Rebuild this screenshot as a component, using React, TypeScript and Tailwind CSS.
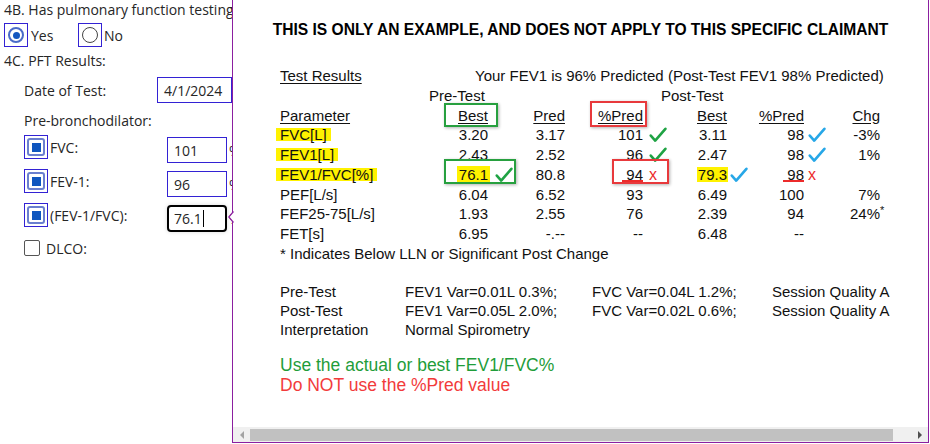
import React from 'react';

const PURPLE = '#8b1fa0';

const Check = ({ color, className = '' }: { color: string; className?: string }) => (
  <svg viewBox="0 0 18 16" className={`w-[18px] h-[16px] shrink-0 ${className}`}>
    <path d="M1.8 8.6 L6.2 13.6 L16.4 1.8" fill="none" stroke={color} strokeWidth="2.6" strokeLinecap="round" strokeLinejoin="round" />
  </svg>
);

const RedX = () => <span className="text-[#ec2b2b] text-[16px] leading-none">x</span>;

const Hl: React.FC<{ children: React.ReactNode }> = ({ children }) => (
  <span className="inline-block bg-[#fff200] leading-[13px] px-[4px] -mx-[4px]">{children}</span>
);

const Struck: React.FC<{ children: React.ReactNode }> = ({ children }) => (
  <span className="relative">
    {children}
    <span className="absolute left-[-4px] right-0 bottom-[1px] h-[2px] bg-[#ec2b2b]"></span>
  </span>
);

// one line of the spirometry table, cells at fixed widths
const Row: React.FC<{ c: React.ReactNode[] }> = ({ c }) => (
  <div className="flex items-center h-[19.75px]">
    <div className="w-[160px] whitespace-nowrap">{c[0]}</div>
    <div className="w-[48px] text-right relative">{c[1]}</div>
    <div className="w-[77px] text-right">{c[2]}</div>
    <div className="w-[78px] text-right">{c[3]}</div>
    <div className="w-[30px] flex items-center pl-[6px]">{c[4]}</div>
    <div className="w-[54px] text-right">{c[5]}</div>
    <div className="w-[22px] flex items-center pl-[3px]">{c[6]}</div>
    <div className="w-[55px] text-right">{c[7]}</div>
    <div className="w-[30px] flex items-center pl-[4px]">{c[8]}</div>
    <div className="w-[46px] text-right">{c[9]}</div>
  </div>
);

const FocusBox: React.FC<{ children: React.ReactNode; className?: string }> = ({ children, className = '' }) => (
  <div className={`w-[24px] h-[24px] border border-[#3322d4] flex items-center justify-center shrink-0 ${className}`}>
    {children}
  </div>
);

const CheckedBox = () => (
  <div className="w-[18px] h-[18px] rounded-[3px] border-2 border-[#6a7fcf] flex items-center justify-center">
    <div className="w-[9px] h-[9px] bg-[#0f56bf]"></div>
  </div>
);

const ValueRow: React.FC<{ label: string; value: string; focused?: boolean }> = ({ label, value, focused }) => (
  <div className="flex items-start h-[34px] pl-[24px]">
    <div className="flex items-center h-[24px] w-[143px] shrink-0">
      <FocusBox>
        <CheckedBox />
      </FocusBox>
      <span className="ml-[2px]">{label}</span>
    </div>
    {focused ? (
      <div className="mt-[2px] w-[60px] h-[27px] shrink-0 border-2 border-black rounded-[4px] flex items-center pl-[5px] shadow-[0_0_4px_rgba(0,0,0,0.15)]">
        {value}
        <span className="w-[1px] h-[17px] bg-black ml-[1px]"></span>
      </div>
    ) : (
      <div className="mt-[2px] w-[60px] h-[26px] shrink-0 border border-[#3322d4] flex items-center pl-[6px]">{value}</div>
    )}
    <span className="ml-[2px] mt-[5px]">%</span>
  </div>
);

const App: React.FC = () => {
  return (
    <div className="flex w-[930px] h-[444px] bg-white overflow-hidden">
      {/* form column */}
      <div className="w-[232px] shrink-0 overflow-hidden font-['Open_Sans',sans-serif] text-[14px] text-[#262626] whitespace-nowrap">
        <div className="pl-[4px] leading-[20px]">4B. Has pulmonary function testing been performed?</div>
        <div className="flex items-center mt-[3px] h-[24px]">
          <div className="flex items-center w-[78px] pl-[4px]">
            <FocusBox className="w-[23px]">
              <div className="w-[16px] h-[16px] rounded-full border-2 border-[#4a6bc8] flex items-center justify-center">
                <div className="w-[7px] h-[7px] rounded-full bg-[#1457c0]"></div>
              </div>
            </FocusBox>
            <span className="ml-[3px]">Yes</span>
          </div>
          <FocusBox className="w-[23px]">
            <div className="w-[16px] h-[16px] rounded-full border-[1.5px] border-[#444]"></div>
          </FocusBox>
          <span className="ml-[2px]">No</span>
        </div>
        <div className="pl-[4px] leading-[20px] mt-[4px]">4C. PFT Results:</div>
        <div className="flex items-center h-[26px] mt-[6px] pl-[24px]">
          <span className="w-[143px]">Date of Test:</span>
          <div className="w-[80px] h-[26px] border border-[#3322d4] flex items-center pl-[6px]">4/1/2024</div>
        </div>
        <div className="pl-[24px] leading-[20px] mt-[8px]">Pre-bronchodilator:</div>
        <div className="mt-[4px]">
          <ValueRow label="FVC:" value="101" />
          <ValueRow label="FEV-1:" value="96" />
          <ValueRow label="(FEV-1/FVC):" value="76.1" focused />
        </div>
        <div className="flex items-center pl-[24px] mt-[3px] h-[16px]">
          <div className="w-[16px] h-[16px] border border-[#555] rounded-[2px]"></div>
          <span className="ml-[6px]">DLCO:</span>
        </div>
      </div>

      {/* example popup */}
      <div className="relative w-[697px] h-[443px] shrink-0 border-l border-r border-b border-[#8b1fa0] flex flex-col bg-white">
        <svg viewBox="0 0 6 12" className="absolute left-[-5px] top-[211px] w-[6px] h-[12px]">
          <polyline points="5.5,0.5 0.8,6 5.5,11.5" fill="white" stroke={PURPLE} strokeWidth="1.2" />
        </svg>

        <div className="relative flex-1 overflow-hidden font-['Liberation_Sans',Arial,sans-serif] text-[15px] text-[#111]">
          <div className="pt-[20px] text-center font-bold text-[15.6px] leading-[20px] text-black">
            THIS IS ONLY AN EXAMPLE, AND DOES NOT APPLY TO THIS SPECIFIC CLAIMANT
          </div>

          <div className="pl-[47px] mt-[26px] leading-[19.75px] whitespace-nowrap">
            <div className="flex h-[19.75px] items-center">
              <span className="w-[195px] underline underline-offset-2">Test Results</span>
              <span>Your FEV1 is 96% Predicted (Post-Test FEV1 98% Predicted)</span>
            </div>
            <div className="flex h-[19.75px] items-center">
              <span className="w-[149px]"></span>
              <span className="w-[232px]">Pre-Test</span>
              <span>Post-Test</span>
            </div>
            <Row
              c={[
                <span className="underline underline-offset-2">Parameter</span>,
                <span className="underline underline-offset-2">Best</span>,
                <span className="underline underline-offset-2">Pred</span>,
                <span className="underline underline-offset-2">%Pred</span>,
                null,
                <span className="underline underline-offset-2">Best</span>,
                null,
                <span className="underline underline-offset-2">%Pred</span>,
                null,
                <span className="underline underline-offset-2">Chg</span>,
              ]}
            />
            <Row c={[<Hl>FVC[L]</Hl>, '3.20', '3.17', '101', <Check color="#1fa344" />, '3.11', null, '98', <Check color="#27a7e7" />, '-3%']} />
            <Row c={[<Hl>FEV1[L]</Hl>, '2.43', '2.52', '96', <Check color="#1fa344" />, '2.47', null, '98', <Check color="#27a7e7" />, '1%']} />
            <Row
              c={[
                <Hl>FEV1/FVC[%]</Hl>,
                <>
                  <span className="inline-block bg-[#fff200] leading-[18px] px-[2px] -mr-[2px]">76.1</span>
                  <Check color="#1fa344" className="absolute left-full top-[2px] ml-[7px]" />
                </>,
                '80.8',
                <Struck>94</Struck>,
                <RedX />,
                <span className="inline-block bg-[#fff200] leading-[15px] px-[1px] -mr-[1px]">79.3</span>,
                <Check color="#27a7e7" />,
                <Struck>98</Struck>,
                <RedX />,
                null,
              ]}
            />
            <Row c={['PEF[L/s]', '6.04', '6.52', '93', null, '6.49', null, '100', null, '7%']} />
            <Row
              c={[
                'FEF25-75[L/s]',
                '1.93',
                '2.55',
                '76',
                null,
                '2.39',
                null,
                '94',
                null,
                <span className="relative">
                  24%<span className="absolute left-full top-[-4px] text-[11px]">*</span>
                </span>,
              ]}
            />
            <Row c={['FET[s]', '6.95', '-.--', '--', null, '6.48', null, '--', null, null]} />
            <div className="h-[19.75px]">* Indicates Below LLN or Significant Post Change</div>

            <div className="mt-[18px] grid grid-cols-[125px_187px_180px_1fr] leading-[19.25px]">
              <span>Pre-Test</span>
              <span>FEV1 Var=0.01L 0.3%;</span>
              <span>FVC Var=0.04L 1.2%;</span>
              <span>Session Quality A</span>
              <span>Post-Test</span>
              <span>FEV1 Var=0.05L 2.0%;</span>
              <span>FVC Var=0.02L 0.6%;</span>
              <span>Session Quality A</span>
              <span>Interpretation</span>
              <span>Normal Spirometry</span>
            </div>

            <div className="mt-[16px] text-[17.5px] leading-[20px]">
              <div className="text-[#1f9d3a]">Use the actual or best FEV1/FVC%</div>
              <div className="text-[#f23b3b]">Do NOT use the %Pred value</div>
            </div>
          </div>

          {/* annotation boxes drawn over the table */}
          <div className="absolute left-[211px] top-[103px] w-[54px] h-[24px] border-2 border-[#27a03f] shadow-[1px_1px_3px_rgba(0,0,0,0.3)]"></div>
          <div className="absolute left-[357px] top-[101px] w-[57px] h-[26px] border-2 border-[#e8393c] shadow-[1px_1px_3px_rgba(0,0,0,0.3)]"></div>
          <div className="absolute left-[211px] top-[159px] w-[72px] h-[25px] border-2 border-[#27a03f] shadow-[1px_1px_3px_rgba(0,0,0,0.3)]"></div>
          <div className="absolute left-[379px] top-[159px] w-[57px] h-[25px] border-2 border-[#e8393c] shadow-[1px_1px_3px_rgba(0,0,0,0.3)]"></div>
        </div>

        {/* horizontal scrollbar */}
        <div className="h-[15px] bg-[#f0f0f0] flex items-center shrink-0">
          <div className="w-[17px] flex justify-center">
            <div className="w-0 h-0 border-y-[4px] border-y-transparent border-r-[4px] border-r-[#a3a3a3]"></div>
          </div>
          <div className="w-[643px] h-[12px] bg-[#c1c1c1]"></div>
          <div className="flex-1"></div>
          <div className="w-[17px] flex justify-center">
            <div className="w-0 h-0 border-y-[4px] border-y-transparent border-l-[4px] border-l-[#505050]"></div>
          </div>
        </div>
      </div>
    </div>
  );
};

export default App;
